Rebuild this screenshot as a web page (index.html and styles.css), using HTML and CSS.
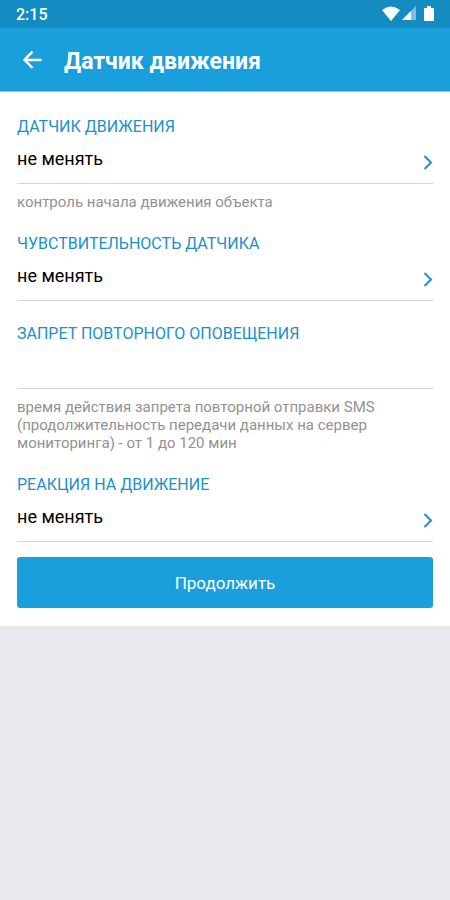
FILE: index.html
```html
<!DOCTYPE html>
<html lang="ru">
<head>
<meta charset="utf-8">
<meta name="viewport" content="width=device-width, initial-scale=1">
<title>Датчик движения</title>
<link rel="stylesheet" href="styles.css">
</head>
<body>
<div class="status">
  <span class="clock">2:15</span>
  <svg class="status-icons" width="52" height="16" viewBox="0 0 52 16" aria-hidden="true">
    <path d="M0 4Q9 -3 18 4L9 15Z" fill="#fff"/>
    <path d="M34 0V14H20Z" fill="#fff" opacity=".45"/>
    <path d="M29 5V14H20Z" fill="#fff"/>
    <path d="M43 2H45V0H49V2H51Q52 2 52 3V14Q52 15 51 15H43Q42 15 42 14V3Q42 2 43 2Z" fill="#fff"/>
  </svg>
</div>
<header class="bar">
  <button class="back" type="button" aria-label="Назад">
    <svg width="20" height="20" viewBox="0 0 20 20" aria-hidden="true"><path d="M19.500 10H3M10.500 1.700L2.500 9.800L10.500 18" fill="none" stroke="#fff" stroke-width="2.400"/></svg>
  </button>
  <h1 class="title">Датчик движения</h1>
</header>
<main>
  <form class="form">
    <div class="field">
      <label class="label" for="sensor">ДАТЧИК ДВИЖЕНИЯ</label>
      <div class="picker">
        <select class="control" id="sensor"><option>не менять</option></select>
        <svg class="chevron" width="10" height="14" viewBox="0 0 10 14" aria-hidden="true"><path d="M1.500 1L8 7.500L1.500 14"/></svg>
      </div>
      <p class="hint">контроль начала движения объекта</p>
    </div>
    <div class="field">
      <label class="label" for="sensitivity">ЧУВСТВИТЕЛЬНОСТЬ ДАТЧИКА</label>
      <div class="picker">
        <select class="control" id="sensitivity"><option>не менять</option></select>
        <svg class="chevron" width="10" height="14" viewBox="0 0 10 14" aria-hidden="true"><path d="M1.500 1L8 7.500L1.500 14"/></svg>
      </div>
    </div>
    <div class="field">
      <label class="label" for="period">ЗАПРЕТ ПОВТОРНОГО ОПОВЕЩЕНИЯ</label>
      <input class="control entry" id="period" type="text" inputmode="numeric">
      <p class="hint">время действия запрета повторной отправки SMS (продолжительность передачи данных на сервер мониторинга) - от 1 до 120 мин</p>
    </div>
    <div class="field">
      <label class="label" for="reaction">РЕАКЦИЯ НА ДВИЖЕНИЕ</label>
      <div class="picker">
        <select class="control" id="reaction"><option>не менять</option></select>
        <svg class="chevron" width="10" height="14" viewBox="0 0 10 14" aria-hidden="true"><path d="M1.500 1L8 7.500L1.500 14"/></svg>
      </div>
    </div>
    <button class="submit" type="button">Продолжить</button>
  </form>
</main>
</body>
</html>
```
FILE: styles.css
```css
* {
  box-sizing: border-box;
}

body {
  margin: 0;
  background: #e8e8ee;
  font-family: Roboto, "Liberation Sans", sans-serif;
  font-size: 16px;
}

.status {
  display: flex;
  align-items: center;
  justify-content: space-between;
  height: 28px;
  padding: 0 16px;
  background: #148bc1;
  color: #fff;
}

.clock {
  padding-top: 2px;
  font-weight: 500;
  line-height: 20px;
}

.bar {
  display: flex;
  align-items: center;
  gap: 20px;
  height: 64px;
  padding: 0 20px;
  background: #189fdc;
  border-bottom: 1px solid #7fc8ea;
  color: #fff;
}

.back {
  display: flex;
  padding: 2px;
  border: 0;
  background: none;
}

.title {
  margin: 0;
  padding-top: 4px;
  font-size: 23px;
  font-weight: 700;
  line-height: 28px;
}

.form {
  display: flex;
  flex-direction: column;
  gap: 23px;
  padding: 25px 17px 18px;
  background: #fff;
}

.field {
  display: flex;
  flex-direction: column;
}

.label {
  color: #1c90cc;
  line-height: 20px;
}

.picker {
  position: relative;
  display: flex;
}

.control {
  appearance: none;
  width: 100%;
  height: 47px;
  margin: 0;
  padding: 0 24px 4px 0;
  border: 0;
  border-bottom: 1px solid #d4d4d6;
  border-radius: 0;
  outline: 0;
  background: none;
  color: #000;
  font: inherit;
  font-size: 18px;
}

.entry {
  height: 45px;
}

.chevron {
  position: absolute;
  right: 0;
  top: 18px;
  overflow: visible;
  fill: none;
  stroke: #1c90cc;
  stroke-width: 2;
  pointer-events: none;
}

.hint {
  margin: 9px 0 0;
  color: #929292;
  font-size: 15px;
  line-height: 18px;
}

.submit {
  height: 51px;
  margin-top: -8px;
  border: 0;
  border-radius: 3px;
  background: #189fdc;
  color: #fff;
  font: inherit;
  font-size: 17px;
}
```
